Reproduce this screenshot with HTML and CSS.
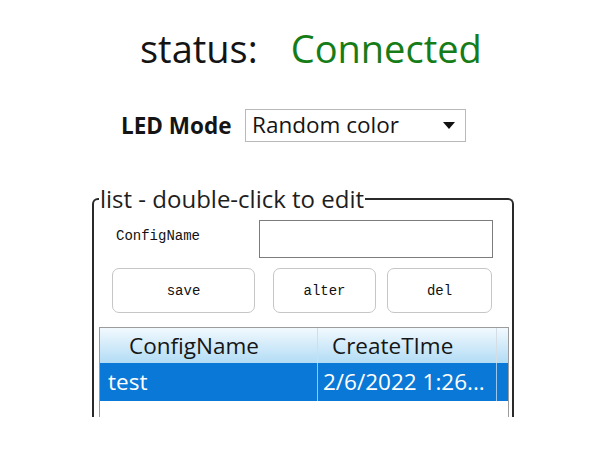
FILE: index.html
```html
<!DOCTYPE html>
<html>
<head>
<meta charset="utf-8">
<link rel="stylesheet" href="styles.css">
</head>
<body>
<div class="page">
  <div class="status">
    <span class="status-label">status:</span>
    <span class="status-value">Connected</span>
  </div>
  <div class="led">
    <span class="led-label">LED Mode</span>
    <div class="select">
      <span class="select-text">Random color</span>
      <span class="arrow"></span>
    </div>
  </div>
  <fieldset class="group">
    <legend class="group-title">list - double-click to edit</legend>
    <div class="name-row">
      <span class="mono name-label">ConfigName</span>
      <div class="input"></div>
    </div>
    <div class="btn-row">
      <button class="btn btn-save">save</button>
      <button class="btn btn-alter">alter</button>
      <button class="btn btn-del">del</button>
    </div>
    <div class="table">
      <div class="thead">
        <div class="cell c1 th1">ConfigName</div>
        <div class="cell c2 th2">CreateTIme</div>
        <div class="cell c3"></div>
      </div>
      <div class="row selected">
        <div class="cell c1 td1">test</div>
        <div class="cell c2 td2">2/6/2022 1:26...</div>
        <div class="cell c3"></div>
      </div>
    </div>
  </fieldset>
</div>
</body>
</html>
```

FILE: styles.css
```css
html, body {
  margin: 0;
  padding: 0;
  background: #ffffff;
}
body {
  width: 600px;
  height: 450px;
  overflow: hidden;
  font-family: "Open Sans", "Noto Sans", sans-serif;
  color: #141414;
}
.page {
  height: 417px;
  overflow: hidden;
}
.status {
  display: flex;
  padding-top: 25px;
  padding-left: 140px;
  font-size: 38px;
  line-height: 46px;
}
.status-value {
  margin-left: 33px;
  color: #157c18;
}
.led {
  display: flex;
  align-items: center;
  margin-top: 38px;
  padding-left: 121px;
}
.led-label {
  font-weight: 700;
  font-size: 22.5px;
  width: 124px;
}
.select {
  box-sizing: border-box;
  width: 221px;
  height: 33px;
  border: 1px solid #b9b9b9;
  display: flex;
  align-items: center;
  justify-content: space-between;
  padding: 0 10px 0 6px;
  font-size: 22.5px;
}
.select-text {
  margin-top: -3px;
}
.arrow {
  width: 0;
  height: 0;
  border-left: 6px solid transparent;
  border-right: 6px solid transparent;
  border-top: 7px solid #111;
}
.group {
  box-sizing: border-box;
  margin: 44px 0 0 92px;
  width: 422px;
  min-height: 320px;
  border: 2px solid #2a2a2a;
  border-bottom: none;
  border-radius: 6px 6px 0 0;
  padding: 0 3px 0 5px;
}
.group-title {
  font-size: 24px;
  line-height: 26px;
  padding: 0 1px;
  color: #1e1e1e;
}
.mono {
  font-family: "Liberation Mono", "DejaVu Sans Mono", monospace;
  font-size: 14px;
  color: #111;
}
.name-row {
  display: flex;
  align-items: center;
  margin-top: 8px;
  padding-left: 17px;
}
.name-label {
  width: 143px;
  margin-top: -6px;
}
.input {
  box-sizing: border-box;
  width: 234px;
  height: 38px;
  border: 1px solid #7c7c7c;
}
.btn-row {
  display: flex;
  margin-top: 10px;
  padding-left: 13px;
}
.btn {
  box-sizing: border-box;
  height: 45px;
  background: #ffffff;
  border: 1px solid #c6c6c6;
  border-radius: 7px;
  font-family: "Liberation Mono", "DejaVu Sans Mono", monospace;
  font-size: 14px;
  color: #111;
  padding: 0;
}
.btn-save { width: 143px; }
.btn-alter { width: 103px; margin-left: 18px; }
.btn-del { width: 105px; margin-left: 11px; }
.table {
  box-sizing: border-box;
  margin-top: 14px;
  width: 410px;
  height: 140px;
  border: 1px solid #9c9c9c;
  border-bottom: none;
}
.thead, .row {
  display: flex;
}
.thead {
  height: 35px;
  background: linear-gradient(#f2f9fe, #b2dcf5);
  font-size: 22.5px;
  line-height: 35px;
  color: #161616;
}
.cell {
  box-sizing: border-box;
  white-space: nowrap;
}
.c1 { width: 218px; border-right: 1px solid #d4dde4; }
.c2 { width: 179px; border-right: 1px solid #d4dde4; }
.c3 { flex: 1; }
.th1 { padding-left: 29px; }
.th2 { padding-left: 14px; }
.row {
  height: 38px;
  font-size: 22.5px;
  line-height: 38px;
}
.selected {
  background: #0a78d6;
  color: #ffffff;
}
.selected .c1, .selected .c2 {
  border-right-color: #9cc6ec;
}
.td1 { padding-left: 8px; }
.td2 { padding-left: 5px; }
```
